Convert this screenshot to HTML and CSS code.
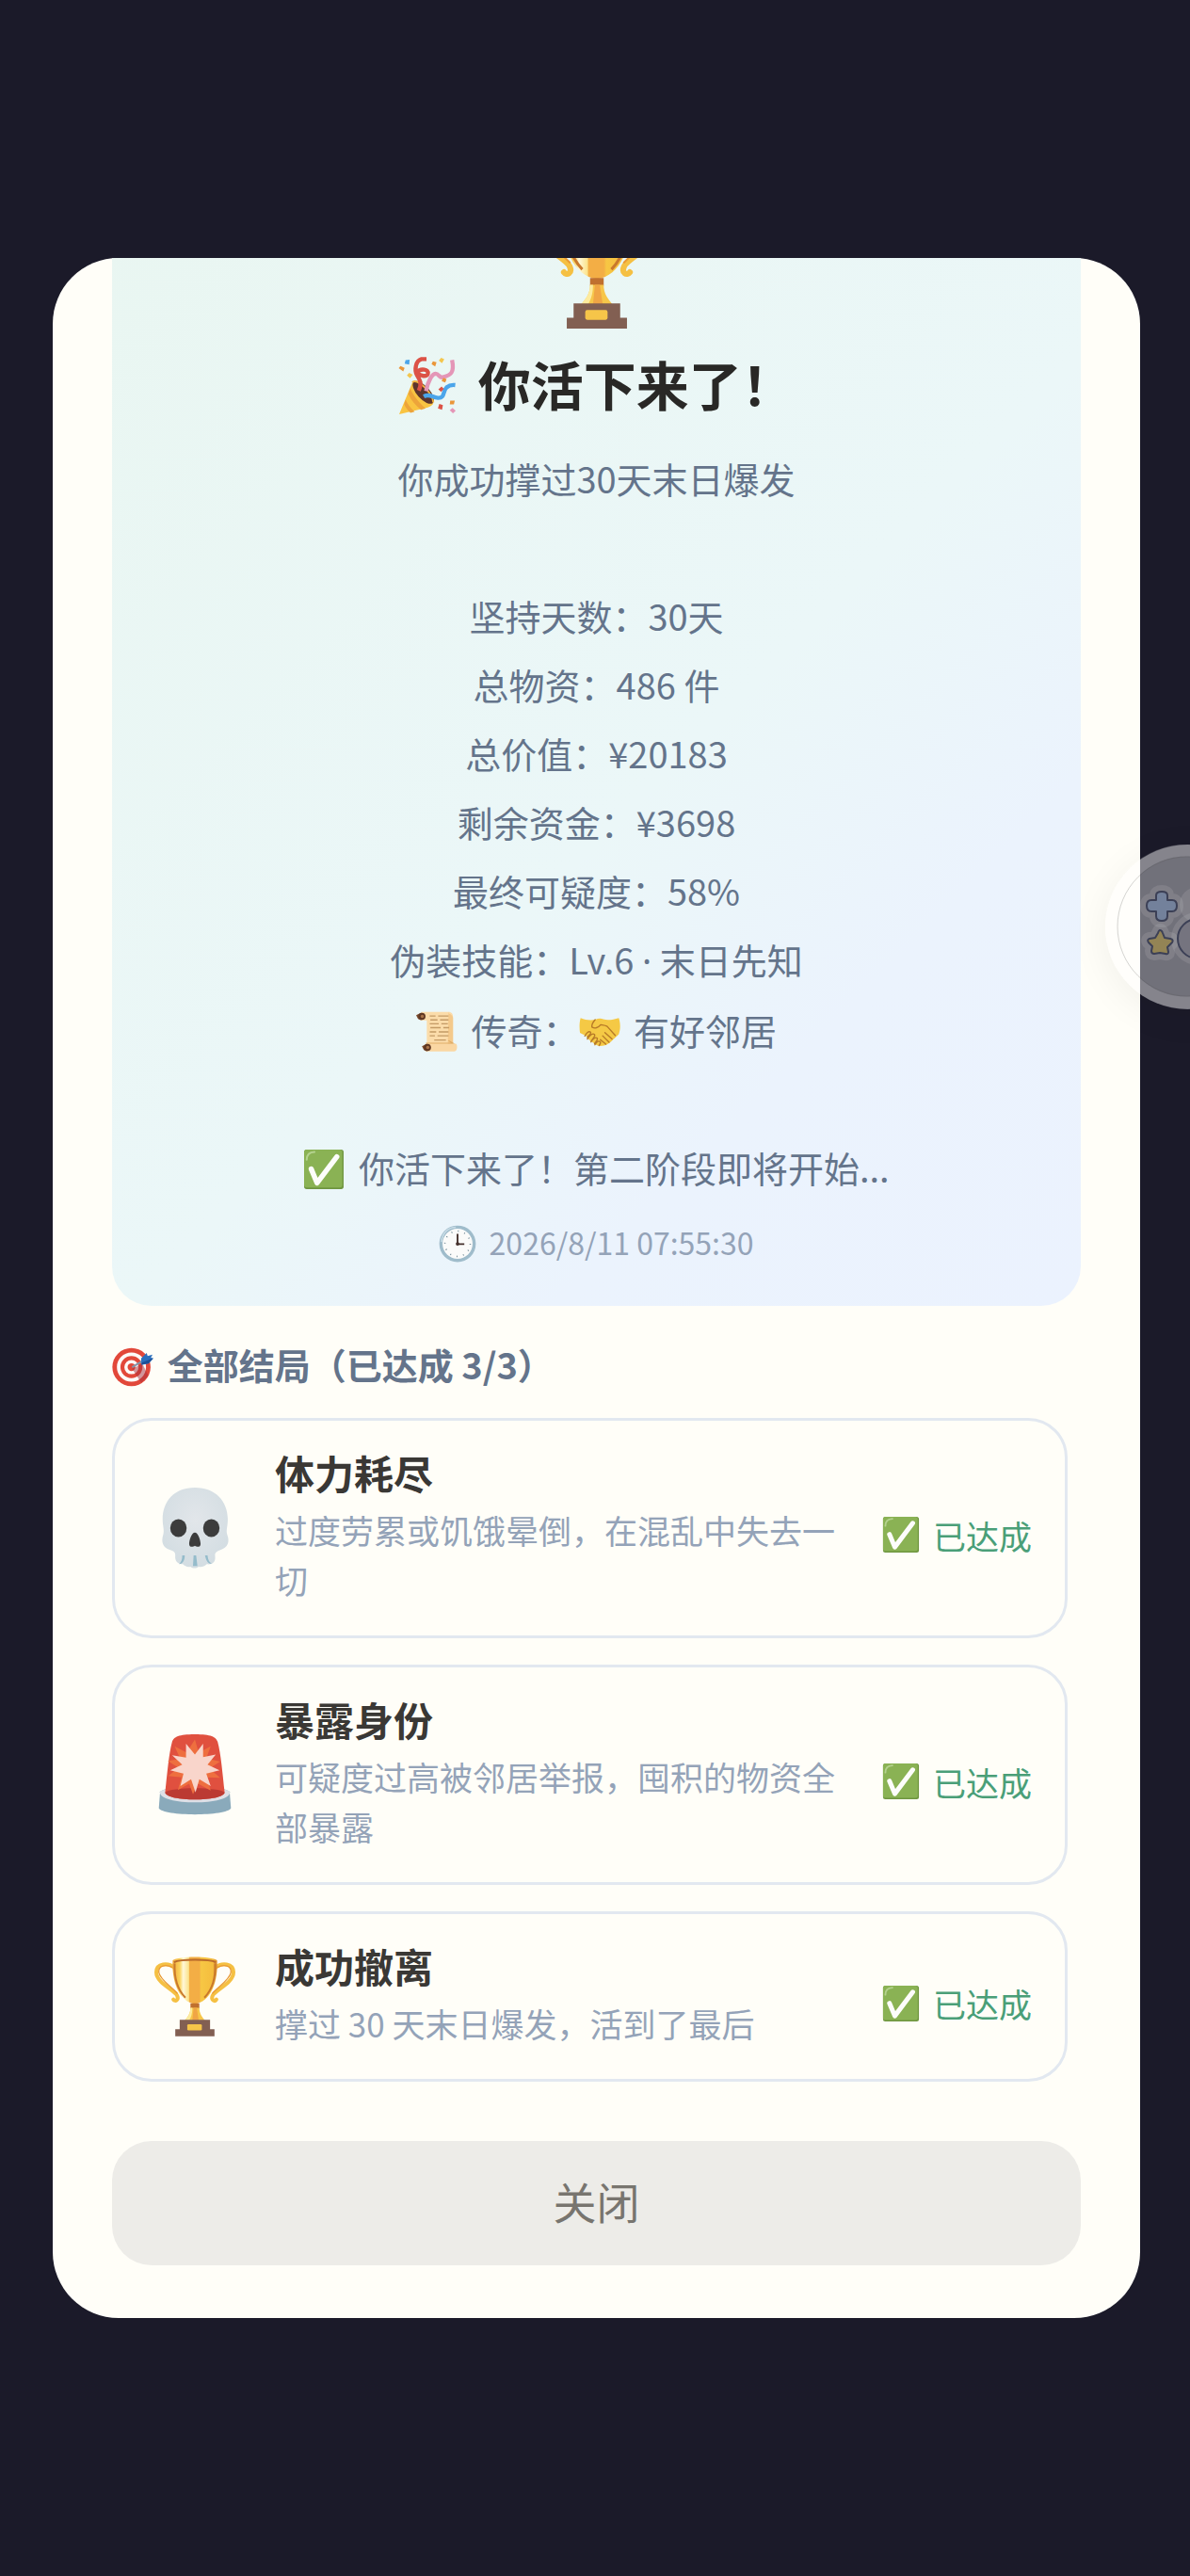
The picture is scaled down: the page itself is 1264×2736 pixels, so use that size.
FILE: index.html
```html
<!DOCTYPE html>
<html lang="zh-CN">
<head>
    <meta charset="UTF-8">
    <meta name="viewport" content="width=device-width, initial-scale=1.0">
    <title>全部结局</title>
    <link rel="stylesheet" href="styles.css">
</head>
<body>
  <!-- shared icons -->
  <svg class="sprite" aria-hidden="true">
    <defs>
      <linearGradient id="gold" x1="0" x2="1" y1="0" y2="0">
        <stop offset="0" stop-color="#f0a93c"/>
        <stop offset=".16" stop-color="#fbd35a"/>
        <stop offset=".24" stop-color="#fff8d8"/>
        <stop offset=".36" stop-color="#fbe38c"/>
        <stop offset=".38" stop-color="#f3ae45"/>
        <stop offset=".6" stop-color="#f3ae45"/>
        <stop offset=".64" stop-color="#f7c744"/>
        <stop offset=".9" stop-color="#f5bd3e"/>
        <stop offset="1" stop-color="#d98a2c"/>
      </linearGradient>
      <radialGradient id="bone" cx=".5" cy=".4" r=".6">
        <stop offset="0" stop-color="#e2e6ea"/>
        <stop offset="1" stop-color="#d3dde2"/>
      </radialGradient>
    </defs>

    <symbol id="trophy" viewBox="0 0 128 128">
      <g fill="none" stroke-linecap="round">
        <path d="M32 18C22 9 3 10 3 25c0 17 29 28 33 37 3 7-3 10-6 6" stroke="#f5c043" stroke-width="6"/>
        <path d="M96 18c10-9 29-8 29 7 0 17-29 28-33 37-3 7 3 10 6 6" stroke="#f5c043" stroke-width="6"/>
        <path d="M28 17C18 12 6 14 7 25c1 11 20 23 29 33M100 17c10-5 22-3 21 8-1 11-20 23-29 33" stroke="#e99a35" stroke-width="2"/>
      </g>
      <path d="M29 6C38-1 90-1 99 6c2 31-9 66-35 69C38 72 27 37 29 6z" fill="url(#gold)"/>
      <path d="M32 11c-1 24 6 43 17 54M96 11c1 24-6 43-17 54" fill="none" stroke="#c9792c" stroke-width="3"/>
      <path d="M31 9c10-5 56-5 66 0" fill="none" stroke="#b9692b" stroke-width="3"/>
      <path d="M57 74h14v8H57z" fill="#c0702f"/>
      <path d="M57 81h14c0 9 4 14 9 20H48c5-6 9-11 9-20z" fill="#f7c64a"/>
      <path d="M62 81h5l3 20H60z" fill="#f0a545"/>
      <path d="M57 81h3c0 9-2 15-5 20h-7c5-6 9-11 9-20z" fill="#fdeb9e"/>
      <path d="M40 100h48v15h7v11H33v-11h7z" fill="#825f52"/>
      <rect x="52" y="107" width="23" height="10" rx="2" fill="#f6c549"/>
    </symbol>

    <symbol id="popper" viewBox="0 0 128 128">
      <path d="M2 126 31 56c7-11 43 19 46 44 0 7-10 10-16 12z" fill="#f9c442"/>
      <path d="M26 69c7 16 21 33 34 44l-10 3c-11-9-22-21-28-35zM16 94c5 11 12 19 20 26l-9 3c-6-6-11-12-14-19z" fill="#eda43a"/>
      <ellipse cx="55" cy="78" rx="14" ry="31" transform="rotate(-42 55 78)" fill="#5d352d"/>
      <path d="M31 56c8-12 44 22 46 44" fill="none" stroke="#f3b33e" stroke-width="4"/>
      <g fill="none" stroke-width="9">
        <path d="M45 74c8-17 2-24-4-34-6-12-3-31 10-35l11 0M41 35c8-12 27-7 24 2-3 8-16 5-23-1" stroke="#dc5246"/>
        <path d="M61 75c4-22 13-37 21-38 8 0 8 12 18 7 14-4 24-8 18-37" stroke="#e496b7"/>
        <path d="M56 87c12-7 19 2 31 3 16 1 10-14 19-23 6-5 11-6 19-5" stroke="#4ba5ea"/>
      </g>
      <path d="M16 7l9-1-1 11-10-2z" fill="#4ba5ea"/>
      <path d="M90 103l8 3-2 10-9-3zM95 65l5 5-6 7-6-6z" fill="#dc5246"/>
      <path d="M5 20l9 4-3 8-10-7zM76 10l8 2-3 9-8-5zM99 46l7 3-3 7-8-3zM114 96h10l-2 8h-9z" fill="#ea963a"/>
      <path d="M24 35l8 4-6 8-7-6zM94 2l7 3-5 9-7-6z" fill="#f4c64e"/>
      <path d="M119 112l7 6-6 6-7-7z" fill="#e496b7"/>
    </symbol>

    <symbol id="scroll" viewBox="0 0 128 128">
      <path d="M16 2h84c10 0 14 7 14 16v92H33V28H14z" fill="#fbdcaa"/>
      <path d="M100 2c-6 4 14 8 14 18v90l-16-8z" fill="#f4c98b"/>
      <path d="M30 100h92c6 0 7 24-4 24H30z" fill="#fad7a3"/>
      <path d="M30 99h84l-14-8" fill="none" stroke="#dfac66" stroke-width="3"/>
      <path d="M0 12l16-8v24l-10-4zM18 108l16-8v24l-10-4z" fill="#7c4b2d"/>
      <circle cx="18" cy="16" r="11" fill="#5f3823"/>
      <circle cx="19" cy="16" r="5" fill="#a97348"/>
      <circle cx="35" cy="112" r="11" fill="#5f3823"/>
      <circle cx="36" cy="112" r="5" fill="#a97348"/>
      <path d="M42 15h18m8 0h32M44 27h22m8 0h26M42 39h28m8 0h20M44 51h32m8 0h18M42 64h20m8 0h30M42 76h16m8 0h34M56 89h36" stroke="#c49a66" stroke-width="4"/>
    </symbol>

    <symbol id="handshake" viewBox="0 0 128 128">
      <path d="M5 21c15 6 30 8 45 5 8-3 17-5 25-1 16 5 32 0 48-4 5 15 6 34 0 50-8 8-15 14-23 22-8 8-17 13-27 14-10 1-20 0-27-8-9-7-17-10-23-22L3 67C1 50 1 34 5 21z" fill="#f5c945"/>
      <path d="M50 26c-6 7-12 13-10 23 9 6 20 2 27-7 6 1 14 1 20 5l25 28M102 86 80 66M93 96 73 76M83 102 66 88" fill="none" stroke="#b77a28" stroke-width="4" stroke-linecap="round" stroke-linejoin="round"/>
      <path d="M18 77c5-10 12-17 18-12 3 4-6 10-10 16M26 86c5-9 16-20 22-14 4 5-6 12-10 20M37 95c5-9 13-16 19-12 4 5-3 10-8 17M49 104c5-9 10-14 16-10 4 4 0 8-3 12" fill="none" stroke="#b77a28" stroke-width="4" stroke-linecap="round"/>
    </symbol>

    <symbol id="check" viewBox="0 0 128 128">
      <rect x="3" y="3" width="122" height="122" rx="8" fill="#6f9640"/>
      <rect x="3" y="3" width="118" height="117" rx="8" fill="#8ab254"/>
      <path d="M11 34c0-15 7-23 24-24" fill="none" stroke="#b4d28e" stroke-width="6" stroke-linecap="round"/>
      <path d="M25 63 43 106 104 25" fill="none" stroke="#fdfdfb" stroke-width="16" stroke-linecap="round" stroke-linejoin="round"/>
    </symbol>

    <symbol id="clock" viewBox="0 0 128 128">
      <circle cx="64" cy="64" r="62" fill="#9fbccb"/>
      <path d="M9 58C12 28 32 8 58 8" fill="none" stroke="#c8dce6" stroke-width="5"/>
      <circle cx="64" cy="64" r="51" fill="#fbfbfa"/>
      <circle cx="64" cy="64" r="43" fill="none" stroke="#6f8794" stroke-width="5" stroke-dasharray="3 19.5"/>
      <path d="M64 30v35h23" fill="none" stroke="#45302c" stroke-width="6"/>
      <circle cx="64" cy="64" r="6" fill="#45302c"/>
    </symbol>

    <symbol id="target" viewBox="0 0 128 128">
      <circle cx="60" cy="67" r="59" fill="#e2483a"/>
      <circle cx="60" cy="67" r="45" fill="#fdfaf8"/>
      <circle cx="60" cy="67" r="34" fill="#e2483a"/>
      <circle cx="60" cy="67" r="22" fill="#fdfaf8"/>
      <circle cx="60" cy="67" r="12" fill="#e2483a"/>
      <path d="M62 72 94 57l18 37-22 21z" fill="#a8303c" opacity=".5"/>
      <path d="M62 67 100 45" stroke="#8296ab" stroke-width="6"/>
      <path d="M90 40 107 23l3 10 15-5-5 10 8 2-15 16-22 4z" fill="#2b6fbd"/>
      <path d="M92 53 127 39l-14 16-22 4z" fill="#1d4f95"/>
    </symbol>

    <symbol id="skull" viewBox="0 0 128 128">
      <path d="M64 0c33 0 52 22 52 50 0 12-3 17-1 24 5 13 0 20-9 24-7 3-11 4-10 11 1 10-6 13-13 12-4 4-9 5-13 4-4 3-9 3-13 0-5 1-9-1-12-4-8 0-13-5-12-14 0-6-4-7-10-9-9-4-13-11-9-24 2-7-1-13-1-24C13 22 31 0 64 0z" fill="url(#bone)"/>
      <ellipse cx="38" cy="64" rx="13" ry="14" fill="#3c3c3c"/>
      <ellipse cx="90" cy="64" rx="13" ry="14" fill="#3c3c3c"/>
      <path d="M64 71c5 0 9 12 9 18 0 6-6 5-9 3-3 2-9 3-9-3 0-6 4-18 9-18z" fill="#3c3c3c"/>
      <path d="M44 107h4c0 8-3 13-9 14 4-4 5-8 5-14zM62 107h4l2 17h-7zM80 107h4c1 8 3 11 7 13-6 1-9-4-11-13z" fill="#95bccb"/>
    </symbol>

    <symbol id="siren" viewBox="0 0 128 128">
      <path d="M9 91c12-11 98-11 110 0l2 26c-6 13-108 13-114 0z" fill="#8aaabb"/>
      <path d="M9 91c12-11 98-11 110 0 4 22-114 22-110 0z" fill="#dedfe6"/>
      <path d="M28 12c3-8 10-12 36-12s33 4 36 12c5 18 8 52 11 80-2 15-92 15-94 0 3-28 6-62 11-80z" fill="#e0503f"/>
      <path d="M17 92c8-9 86-9 94 0-2 15-92 15-94 0z" fill="#bb3a33"/>
      <path d="M64 8l6 21 19-10-7 19 22 5-17 11 17 15-21-1 6 21-20-11-8 17-6-17-18 10 6-20-21-2 16-13-17-11 20-3-9-20 19 10z" fill="#ee6f3f"/>
      <path d="M50 15 64 32 77 15 77 36 97 32 84 48 103 57 82 62 89 82 71 71 65 92 58 71 41 82 46 62 25 57 44 48 28 33 50 37z" fill="#f9d5cb"/>
    </symbol>
  </svg>

  <div class="overlay">
    <div class="modal" role="dialog" aria-labelledby="resultTitle">
      <div class="modalBody">

        <div class="result">
          <svg class="bigIcon" aria-hidden="true"><use href="#trophy"/></svg>
          <h1 id="resultTitle"><svg class="titleIcon" aria-hidden="true"><use href="#popper"/></svg> 你活下来了！</h1>
          <p class="stats">
            你成功撑过30天末日爆发<br>
            <br>
            坚持天数：30天<br>
            总物资：486 件<br>
            总价值：¥20183<br>
            剩余资金：¥3698<br>
            最终可疑度：58%<br>
            伪装技能：Lv.6 <span class="dot">·</span> 末日先知<br>
            <svg class="icon" aria-hidden="true"><use href="#scroll"/></svg> 传奇：<svg class="icon" aria-hidden="true"><use href="#handshake"/></svg> 有好邻居<br>
            <br>
            <svg class="icon" aria-hidden="true"><use href="#check"/></svg> 你活下来了！第二阶段即将开始...
          </p>
          <p class="time"><svg class="icon" aria-hidden="true"><use href="#clock"/></svg> 2026/8/11 07:55:30</p>
        </div>

        <h2><svg class="icon" aria-hidden="true"><use href="#target"/></svg> 全部结局（已达成 3/3）</h2>

        <ul class="endings">
          <li class="ending">
            <svg class="endingIcon" aria-hidden="true"><use href="#skull"/></svg>
            <div class="info">
              <h3>体力耗尽</h3>
              <p>过度劳累或饥饿晕倒，在混乱中失去一切</p>
            </div>
            <span class="status"><svg class="icon" aria-hidden="true"><use href="#check"/></svg>已达成</span>
          </li>
          <li class="ending">
            <svg class="endingIcon" aria-hidden="true"><use href="#siren"/></svg>
            <div class="info">
              <h3>暴露身份</h3>
              <p>可疑度过高被邻居举报，囤积的物资全部暴露</p>
            </div>
            <span class="status"><svg class="icon" aria-hidden="true"><use href="#check"/></svg>已达成</span>
          </li>
          <li class="ending">
            <svg class="endingIcon" aria-hidden="true"><use href="#trophy"/></svg>
            <div class="info">
              <h3>成功撤离</h3>
              <p>撑过 30 天末日爆发，活到了最后</p>
            </div>
            <span class="status"><svg class="icon" aria-hidden="true"><use href="#check"/></svg>已达成</span>
          </li>
        </ul>

        <button type="button" class="closeBtn">关闭</button>
      </div>
    </div>
  </div>

  <!-- floating game button, half off the edge -->
  <button type="button" class="gameBall" aria-label="游戏">
    <svg viewBox="0 0 175 175" aria-hidden="true">
      <circle cx="87" cy="87" r="81" fill="none" stroke="#fff" stroke-opacity=".14" stroke-width="13"/>
      <circle cx="87" cy="87" r="74" fill="none" stroke="#555" stroke-opacity=".25"/>
      <g stroke="#fff" stroke-opacity=".1" stroke-width="14" stroke-linejoin="round" fill="none">
        <path d="M54 54q0-4 6-4t6 4v5h5q5 0 5 6t-5 6h-5v5q0 5-6 5t-6-5v-5h-5q-5 0-5-6t5-6h5z"/>
        <path d="M58 91q2 0 3 3l2 5 6 1q4 1 2 4l-5 5 1 5q0 3-3 2l-6-1-6 1q-3 0-3-3l1-5-4-4q-2-3 1-4l6-1 3-5q1-3 2-3z"/>
        <circle cx="98" cy="100" r="21"/>
        <circle cx="98" cy="64" r="12"/>
      </g>
      <g stroke="#3c4056" stroke-width="2" stroke-linejoin="round">
        <path d="M54 54q0-4 6-4t6 4v5h5q5 0 5 6t-5 6h-5v5q0 5-6 5t-6-5v-5h-5q-5 0-5-6t5-6h5z" fill="#73819b"/>
        <path d="M58 91q2 0 3 3l2 5 6 1q4 1 2 4l-5 5 1 5q0 3-3 2l-6-1-6 1q-3 0-3-3l1-5-4-4q-2-3 1-4l6-1 3-5q1-3 2-3z" fill="#938455"/>
        <circle cx="98" cy="100" r="21" fill="#75747f"/>
      </g>
    </svg>
  </button>
</body>
</html>
```

FILE: styles.css
```css
*
{
    box-sizing: border-box;
}
body
{
    margin: 0;
    overflow: hidden;
    background-color: #1b1a29;
    font-family: "Noto Sans CJK SC", "Noto Sans", sans-serif;
    color: #64748b;
}
h1, h2, h3, p, ul
{
    margin: 0;
    padding: 0;
}
.sprite
{
    position: absolute;
    width: 0;
    height: 0;
}
.overlay
{
    display: flex;
    align-items: center;
    height: 100vh;
    padding: 0 53px 0 56px;
}
.modal
{
    width: 100%;
    height: 80vh;
    border-radius: 70px;
    background-color: #fffef8;
    overflow: hidden;
}
/* scrolled to the end, so the top of the result runs off */
.modalBody
{
    display: flex;
    flex-direction: column;
    justify-content: flex-end;
    height: 100%;
    padding: 0 63px 56px;
}
.icon
{
    width: 44px;
    height: 44px;
    margin-right: 6px;
    vertical-align: -8px;
}

.result
{
    padding: 42px 42px 45px;
    border-radius: 42px;
    background: linear-gradient(135deg, #e9f6f1, #ebf7f8 55%, #ebf3fd 75%, #ebf2fe);
    text-align: center;
}
.bigIcon
{
    display: block;
    width: 132px;
    height: 132px;
    margin: 0 auto 14px;
}
h1
{
    margin-bottom: 22px;
    font-size: 56px;
    line-height: 84px;
    color: #292826;
}
.titleIcon
{
    width: 62px;
    height: 62px;
    margin-right: 10px;
    vertical-align: -10px;
}
.stats
{
    font-size: 38px;
    line-height: 73px;
}
.dot
{
    font-family: "Noto Sans", sans-serif;
}
.time
{
    margin-top: 20px;
    font-size: 32px;
    line-height: 46px;
    color: #94a3b8;
}
.time .icon
{
    width: 40px;
    height: 40px;
}

h2
{
    margin: 33px 0 28px;
    font-size: 38px;
    line-height: 58px;
}
.endings
{
    display: flex;
    flex-direction: column;
    gap: 28px;
    margin-right: 14px;
    list-style: none;
}
.ending
{
    display: flex;
    align-items: center;
    gap: 35px;
    padding: 23px 35px;
    border: 3px solid #e2e8f0;
    border-radius: 42px;
}
.endingIcon
{
    flex: none;
    width: 100px;
    height: 86px;
}
.info
{
    flex: 1;
    padding-bottom: 10px;
}
.info h3
{
    margin-bottom: 3px;
    font-size: 42px;
    line-height: 63px;
    color: #3a3835;
}
.info p
{
    font-size: 35px;
    line-height: 53px;
    color: #94a3b8;
}
.status
{
    display: flex;
    align-items: center;
    gap: 14px;
    padding-top: 14px;
    font-size: 35px;
    line-height: 53px;
    color: #4a9f78;
    white-space: nowrap;
}
.status .icon
{
    width: 40px;
    height: 40px;
    margin-right: 0;
}

.closeBtn
{
    flex: none;
    height: 132px;
    margin-top: 63px;
    padding: 0 0 6px;
    border: none;
    border-radius: 42px;
    background-color: #edece8;
    font-family: inherit;
    font-size: 46px;
    color: #78756f;
}

.gameBall
{
    position: fixed;
    top: 897px;
    right: -85px;
    width: 175px;
    height: 175px;
    padding: 0;
    border: none;
    border-radius: 50%;
    background-color: rgba(255, 255, 255, 0.38);
    box-shadow: 0 8px 42px rgba(0, 0, 0, 0.06);
}
.gameBall svg
{
    display: block;
    width: 100%;
    height: 100%;
}
```
